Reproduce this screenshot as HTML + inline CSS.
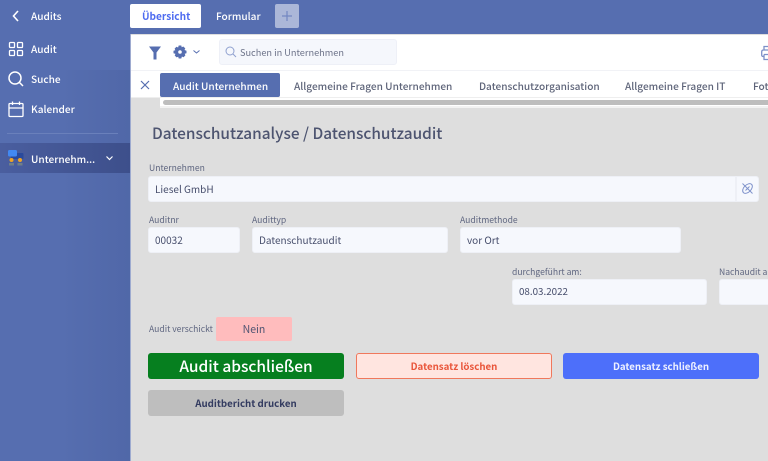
<!DOCTYPE html>
<html lang="de"><head><meta charset="utf-8"><title>Audits</title>
<style>
*{box-sizing:border-box}
html,body{margin:0;padding:0}
body{width:768px;height:461px;overflow:hidden;position:relative;background:#566eb0;font-family:"Noto Sans CJK JP","Liberation Sans",sans-serif;font-size:10px;color:#4a5272}
.a{position:absolute;white-space:nowrap}
.t{position:absolute;white-space:nowrap;line-height:16px;font-weight:500;font-size:10.1px}
.w{color:#fff}
.l{position:absolute;white-space:nowrap;font-size:8.6px;line-height:14px;color:#5f6680}
.i{position:absolute;background:#f6f8fd;border:1px solid #eef0f6;border-radius:3px;font-size:10px;line-height:24px;padding-left:6px;color:#474e6c;height:26px}
.b{position:absolute;height:26px;border-radius:3px;text-align:center;line-height:26px;font-weight:700;font-size:9.700px}
svg{position:absolute;display:block}
</style></head><body>
<div class="a" style="left:60px;top:70px;width:70px;height:391px;background:linear-gradient(90deg,rgba(60,80,140,0),rgba(60,80,140,.22))"></div>
<svg style="left:10px;top:9px" width="12" height="14" viewBox="0 0 12 14" fill="none" stroke="#fff" stroke-width="1.600"><path d="M8 2L3.500 7L8 12"/></svg>
<div class="t w" style="left:31px;top:8px">Audits</div>
<svg style="left:8px;top:41px" width="16" height="16" viewBox="0 0 16 16" fill="none" stroke="#fff" stroke-width="1.300"><rect x="1.500" y="1.500" width="5" height="5" rx=".8"/><rect x="9.500" y="1.500" width="5" height="5" rx=".8"/><rect x="1.500" y="9.500" width="5" height="5" rx=".8"/><rect x="9.500" y="9.500" width="5" height="5" rx=".8"/></svg>
<div class="t w" style="left:31px;top:41px">Audit</div>
<svg style="left:7px;top:70px" width="17" height="17" viewBox="0 0 17 17" fill="none" stroke="#fff" stroke-width="1.500"><circle cx="8" cy="8" r="6"/><path d="M12.500 12.500L16 16"/></svg>
<div class="t w" style="left:31px;top:71px">Suche</div>
<svg style="left:8px;top:101px" width="16" height="17" viewBox="0 0 16 17" fill="none" stroke="#fff" stroke-width="1.300"><rect x="1" y="2.500" width="14" height="13" rx="1"/><path d="M1 7H15M4.500 .5V4M11.500 .5V4"/></svg>
<div class="t w" style="left:31px;top:101px">Kalender</div>
<div class="a" style="left:7px;top:133px;width:111px;height:1px;background:#6a80bb"></div>
<div class="a" style="left:0;top:143px;width:130px;height:30px;background:linear-gradient(90deg,#4a5e9f,#3d4f8b)"></div>
<svg style="left:8px;top:150px" width="16" height="16" viewBox="0 0 16 16"><rect x="3" y="3" width="12.500" height="6" rx="1" fill="#2a4a9c"/><rect x="0" y="0" width="9" height="6.500" rx="1.500" fill="#4289f2"/><circle cx="3.500" cy="10" r="2" fill="#efa324"/><circle cx="12" cy="10" r="2" fill="#efa324"/><rect x="1" y="13" width="5" height="2.500" fill="#6f7f88"/><rect x="9.500" y="13" width="5" height="2.500" fill="#6f7f88"/></svg>
<div class="t w" style="left:31px;top:151px">Unternehm...</div>
<svg style="left:105px;top:155px" width="9" height="7" viewBox="0 0 9 7" fill="none" stroke="#fff" stroke-width="1.200"><path d="M1.500 1.500L4.500 4.500L7.500 1.500"/></svg>

<div class="a" style="left:130px;top:4px;width:71px;height:24px;background:#fff;border-radius:2px"></div>
<div class="t" style="left:142px;top:8px;color:#4d6bf0;font-weight:700">Übersicht</div>
<div class="t w" style="left:216px;top:8px">Formular</div>
<div class="a" style="left:275px;top:4px;width:24px;height:24px;background:#abb7d8;border-radius:2px"></div>
<svg style="left:281px;top:10px" width="12" height="12" viewBox="0 0 12 12" stroke="#7387c2" stroke-width="1.200"><path d="M6 1V11M1 6H11"/></svg>

<div class="a" style="left:130px;top:34px;width:638px;height:427px;background:#dedede;border-left:1px solid #9eabd0"></div>
<div class="a" style="left:131px;top:35px;width:637px;height:35px;background:#fff"></div>
<div class="a" style="left:131px;top:70px;width:637px;height:27px;background:#fff;border-top:1px solid #f1f2f6"></div>
<div class="a" style="left:131px;top:97px;width:637px;height:1px;background:#eee"></div>
<div class="a" style="left:160px;top:98px;width:608px;height:10px;background:#fff"></div>
<div class="a" style="left:163px;top:100px;width:605px;height:5px;background:#bdbdbd;border-radius:3px 0 0 3px"></div>
<div class="a" style="left:160px;top:106px;width:608px;height:2px;background:#f2f2f2"></div>

<svg style="left:149px;top:46px" width="12" height="14" viewBox="0 0 12 14" fill="#566eb0"><path d="M0 .5H12L7.500 6.500V13.500H4.500V6.500Z"/></svg>
<svg style="left:173px;top:45px" width="14" height="14" viewBox="0 0 14 14"><path fill="#566eb0" fill-rule="evenodd" d="M5.700 .5H8.300L8.700 2.200L10.300 1.500L12.300 3.400L11.500 5L13.500 5.700V8.300L11.700 8.800L12.400 10.400L10.500 12.300L8.900 11.500L8.300 13.500H5.700L5.200 11.700L3.600 12.400L1.700 10.500L2.500 8.900L.5 8.300V5.700L2.300 5.200L1.600 3.600L3.500 1.700L5.100 2.500ZM7 5.200A1.800 1.800 0 1 0 7 8.800A1.800 1.800 0 1 0 7 5.200Z"/></svg>
<svg style="left:192px;top:49px" width="9" height="6" viewBox="0 0 9 6" fill="none" stroke="#566eb0" stroke-width="1"><path d="M1.500 1.500L4.500 4L7.500 1.500"/></svg>
<div class="a" style="left:219px;top:39px;width:178px;height:26px;background:#f5f7fc;border:1px solid #eef0f7;border-radius:3px"></div>
<svg style="left:225px;top:46px" width="12" height="12" viewBox="0 0 12 12" fill="none" stroke="#8fa0cf" stroke-width="1"><circle cx="5" cy="5" r="4"/><path d="M8 8L11 11"/></svg>
<div class="t" style="left:240px;top:44px;font-size:9.200px;font-weight:400;color:#6d7389">Suchen in Unternehmen</div>
<svg style="left:761px;top:45px" width="7" height="16" viewBox="0 0 7 16" fill="none" stroke="#7d90c8" stroke-width="1.300"><path d="M3 5V1.500H8M3 11.500H2Q.7 11.500 .7 10V7Q.7 5 2.500 5H8M3 9.500V14.500H8M3 9.500H8"/></svg>

<svg style="left:140px;top:80px" width="10" height="10" viewBox="0 0 10 10" stroke="#566eb0" stroke-width="1.200"><path d="M1 1L9 9M9 1L1 9"/></svg>
<div class="a" style="left:160px;top:73px;width:120px;height:24px;background:#566eb0;border-radius:2px"></div>
<div class="t w" style="left:173px;top:78px">Audit Unternehmen</div>
<div class="t" style="left:294px;top:78px;color:#5e6479">Allgemeine Fragen Unternehmen</div>
<div class="t" style="left:479px;top:78px;color:#5e6479">Datenschutzorganisation</div>
<div class="t" style="left:625px;top:78px;color:#5e6479">Allgemeine Fragen IT</div>
<div class="t" style="left:753px;top:78px;color:#5e6479">Fot</div>

<div class="a" style="left:152px;top:122px;font-size:15.400px;line-height:22px;font-weight:500;color:#4d5470">Datenschutzanalyse / Datenschutzaudit</div>

<div class="l" style="left:149px;top:161px">Unternehmen</div>
<div class="i" style="left:148px;top:176px;width:588px;border-radius:3px 0 0 3px;line-height:23px">Liesel GmbH</div>
<div class="a" style="left:736px;top:176px;width:23px;height:26px;background:#f6f8fd;border:1px solid #eef0f6;border-radius:0 3px 3px 0"></div>
<svg style="left:741px;top:182px" width="13" height="13" viewBox="0 0 13 13" fill="none" stroke="#7f92cb" stroke-width="1"><path d="M1.500 1.500L11.500 11.500"/><ellipse cx="6.500" cy="6.500" rx="5.800" ry="3.600" transform="rotate(-45 6.500 6.500)"/><path d="M4.500 8.500L8.500 4.500"/></svg>

<div class="l" style="left:149px;top:213px">Auditnr</div>
<div class="i" style="left:148px;top:227px;width:92px">00032</div>
<div class="l" style="left:252px;top:213px">Audittyp</div>
<div class="i" style="left:252px;top:227px;width:196px">Datenschutzaudit</div>
<div class="l" style="left:460px;top:213px">Auditmethode</div>
<div class="i" style="left:460px;top:227px;width:221px">vor Ort</div>

<div class="l" style="left:512px;top:265px">durchgeführt am:</div>
<div class="i" style="left:512px;top:279px;width:195px;font-size:9.800px;line-height:23px">08.03.2022</div>
<div class="l" style="left:719px;top:265px">Nachaudit am:</div>
<div class="i" style="left:719px;top:279px;width:60px"></div>

<div class="l" style="left:149px;top:322px">Audit verschickt</div>
<div class="a" style="left:216px;top:317px;width:76px;height:24px;background:#ffbcbd;border-radius:2px;text-align:center;line-height:25px;font-size:10.500px;font-weight:400;color:#4f5472">Nein</div>

<div class="b" style="left:148px;top:353px;width:196px;background:#067f1f;color:#fff;font-size:15.500px;font-weight:500">Audit abschließen</div>
<div class="b" style="left:356px;top:353px;width:196px;background:#ffe5e0;border:1px solid #f0785c;color:#e9553a;line-height:25px">Datensatz löschen</div>
<div class="b" style="left:563px;top:353px;width:196px;background:#4d6ffa;color:#eef1ff">Datensatz schließen</div>
<div class="b" style="left:148px;top:390px;width:196px;background:#bebebe;color:#333b60">Auditbericht drucken</div>
</body></html>
